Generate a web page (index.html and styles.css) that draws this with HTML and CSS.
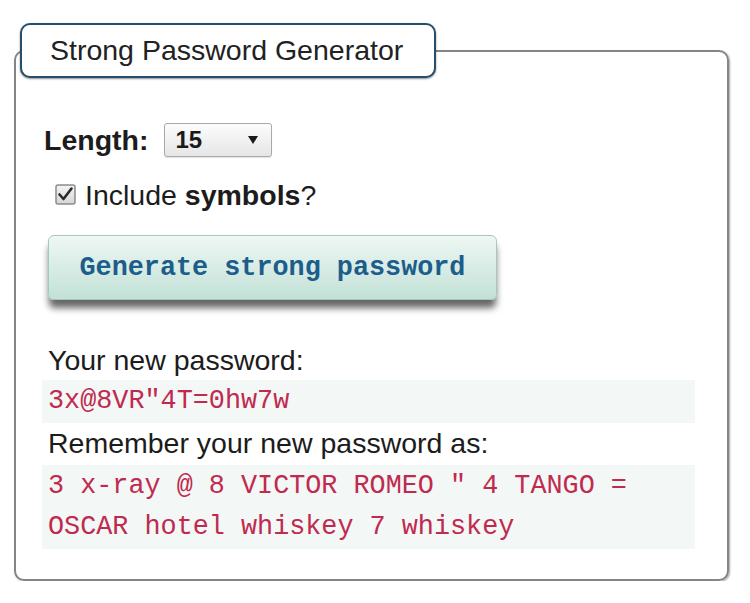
FILE: index.html
```html
<!DOCTYPE html>
<html>
<head>
<meta charset="utf-8">
<link rel="stylesheet" href="styles.css">
</head>
<body>
<fieldset class="gen">
  <legend class="gen-title">Strong Password Generator</legend>
  <div class="gen-body">
    <div class="row-length">
      <span class="lbl-bold">Length:</span>
      <span class="fake-select"><span class="sel-val">15</span><span class="sel-arrow"></span></span>
    </div>
    <div class="row-check">
      <svg class="cbox" width="21" height="21" viewBox="0 0 21 21">
        <defs>
          <linearGradient id="cg" x1="0" y1="0" x2="0" y2="1">
            <stop offset="0" stop-color="#f4f4f4"/>
            <stop offset="1" stop-color="#d6d6d6"/>
          </linearGradient>
        </defs>
        <rect x="1" y="1" width="19" height="19" rx="2" fill="url(#cg)" stroke="#8c8c8c" stroke-width="1.5"/>
        <path d="M4.5 10.5 L8.5 15 L16.5 4.5" fill="none" stroke="#2a2a2a" stroke-width="2.6" stroke-linecap="round" stroke-linejoin="round"/>
      </svg><span class="check-text">Include <b>symbols</b>?</span>
    </div>
    <button class="gen-btn" type="button">Generate strong password</button>
    <div class="lbl">Your new password:</div>
    <div class="pw-box">3x@8VR"4T=0hw7w</div>
    <div class="lbl lbl-2">Remember your new password as:</div>
    <div class="pw-box pw-box-2">3 x-ray @ 8 VICTOR ROMEO " 4 TANGO = OSCAR hotel whiskey 7 whiskey</div>
  </div>
</fieldset>
</body>
</html>
```
FILE: styles.css
```css
html, body {
  margin: 0;
  padding: 0;
  background: #ffffff;
}
body {
  font-family: "Liberation Sans", Arial, sans-serif;
  font-size: 28.5px;
  color: #1c1c1c;
}
.gen {
  box-sizing: border-box;
  width: 715px;
  margin: 23px 0 0 14px;
  padding: 0;
  border: 2px solid #858585;
  border-radius: 10px;
  box-shadow: 1px 1px 2px rgba(0, 0, 0, 0.35);
  min-width: 0;
}
.gen-title {
  margin-left: 4px;
  padding: 9px 31px 9px 28px;
  line-height: 33px;
  border: 2px solid #244f6e;
  border-radius: 10px;
  background: #fff;
  color: #222;
  box-shadow: 0 1px 2px rgba(0, 0, 0, 0.45);
}
.gen-body {
  padding: 0 32px 30px 26px;
}
.row-length {
  display: flex;
  align-items: center;
  height: 34px;
  margin-top: 45px;
  margin-left: 2px;
}
.lbl-bold {
  font-weight: bold;
  line-height: 33px;
}
.fake-select {
  box-sizing: border-box;
  display: flex;
  align-items: center;
  justify-content: space-between;
  width: 108px;
  height: 34px;
  margin-left: 16px;
  padding: 0 13px 0 10px;
  border: 1px solid #a9a9a9;
  border-radius: 3px;
  background: linear-gradient(#fcfcfc, #e6e6e6);
  box-shadow: 0 1px 1px rgba(0, 0, 0, 0.12);
}
.sel-val {
  font-size: 24px;
  font-weight: bold;
  color: #1a1a1a;
  line-height: 30px;
}
.sel-arrow {
  width: 0;
  height: 0;
  border-left: 5px solid transparent;
  border-right: 5px solid transparent;
  border-top: 8px solid #1a1a1a;
}
.row-check {
  margin-top: 22px;
  margin-left: 13px;
  height: 33px;
  line-height: 33px;
}
.cbox {
  display: inline-block;
  vertical-align: baseline;
  margin-right: 9px;
}
.check-text b {
  font-weight: bold;
}
.gen-btn {
  display: block;
  box-sizing: border-box;
  width: 449px;
  height: 65px;
  margin: 23px 0 0 6px;
  padding: 0;
  border: 1px solid #a3c9bf;
  border-radius: 6px;
  background: linear-gradient(#eef7f4, #c2e1d7);
  box-shadow: 0 9px 7px -1px rgba(0, 0, 0, 0.6);
  font-family: "Liberation Mono", "Courier New", monospace;
  font-size: 26.8px;
  font-weight: bold;
  color: #1d5d8b;
  text-align: center;
}
.lbl {
  margin: 44px 0 0 6px;
  line-height: 33px;
}
.lbl-2 {
  margin-top: 4px;
}
.pw-box {
  margin-top: 3px;
  padding: 1px 6px;
  background: #f3f7f6;
  font-family: "Liberation Mono", "Courier New", monospace;
  font-size: 26.8px;
  line-height: 41px;
  color: #c02a4f;
}
.pw-box-2 {
  margin-top: 5px;
}
```
